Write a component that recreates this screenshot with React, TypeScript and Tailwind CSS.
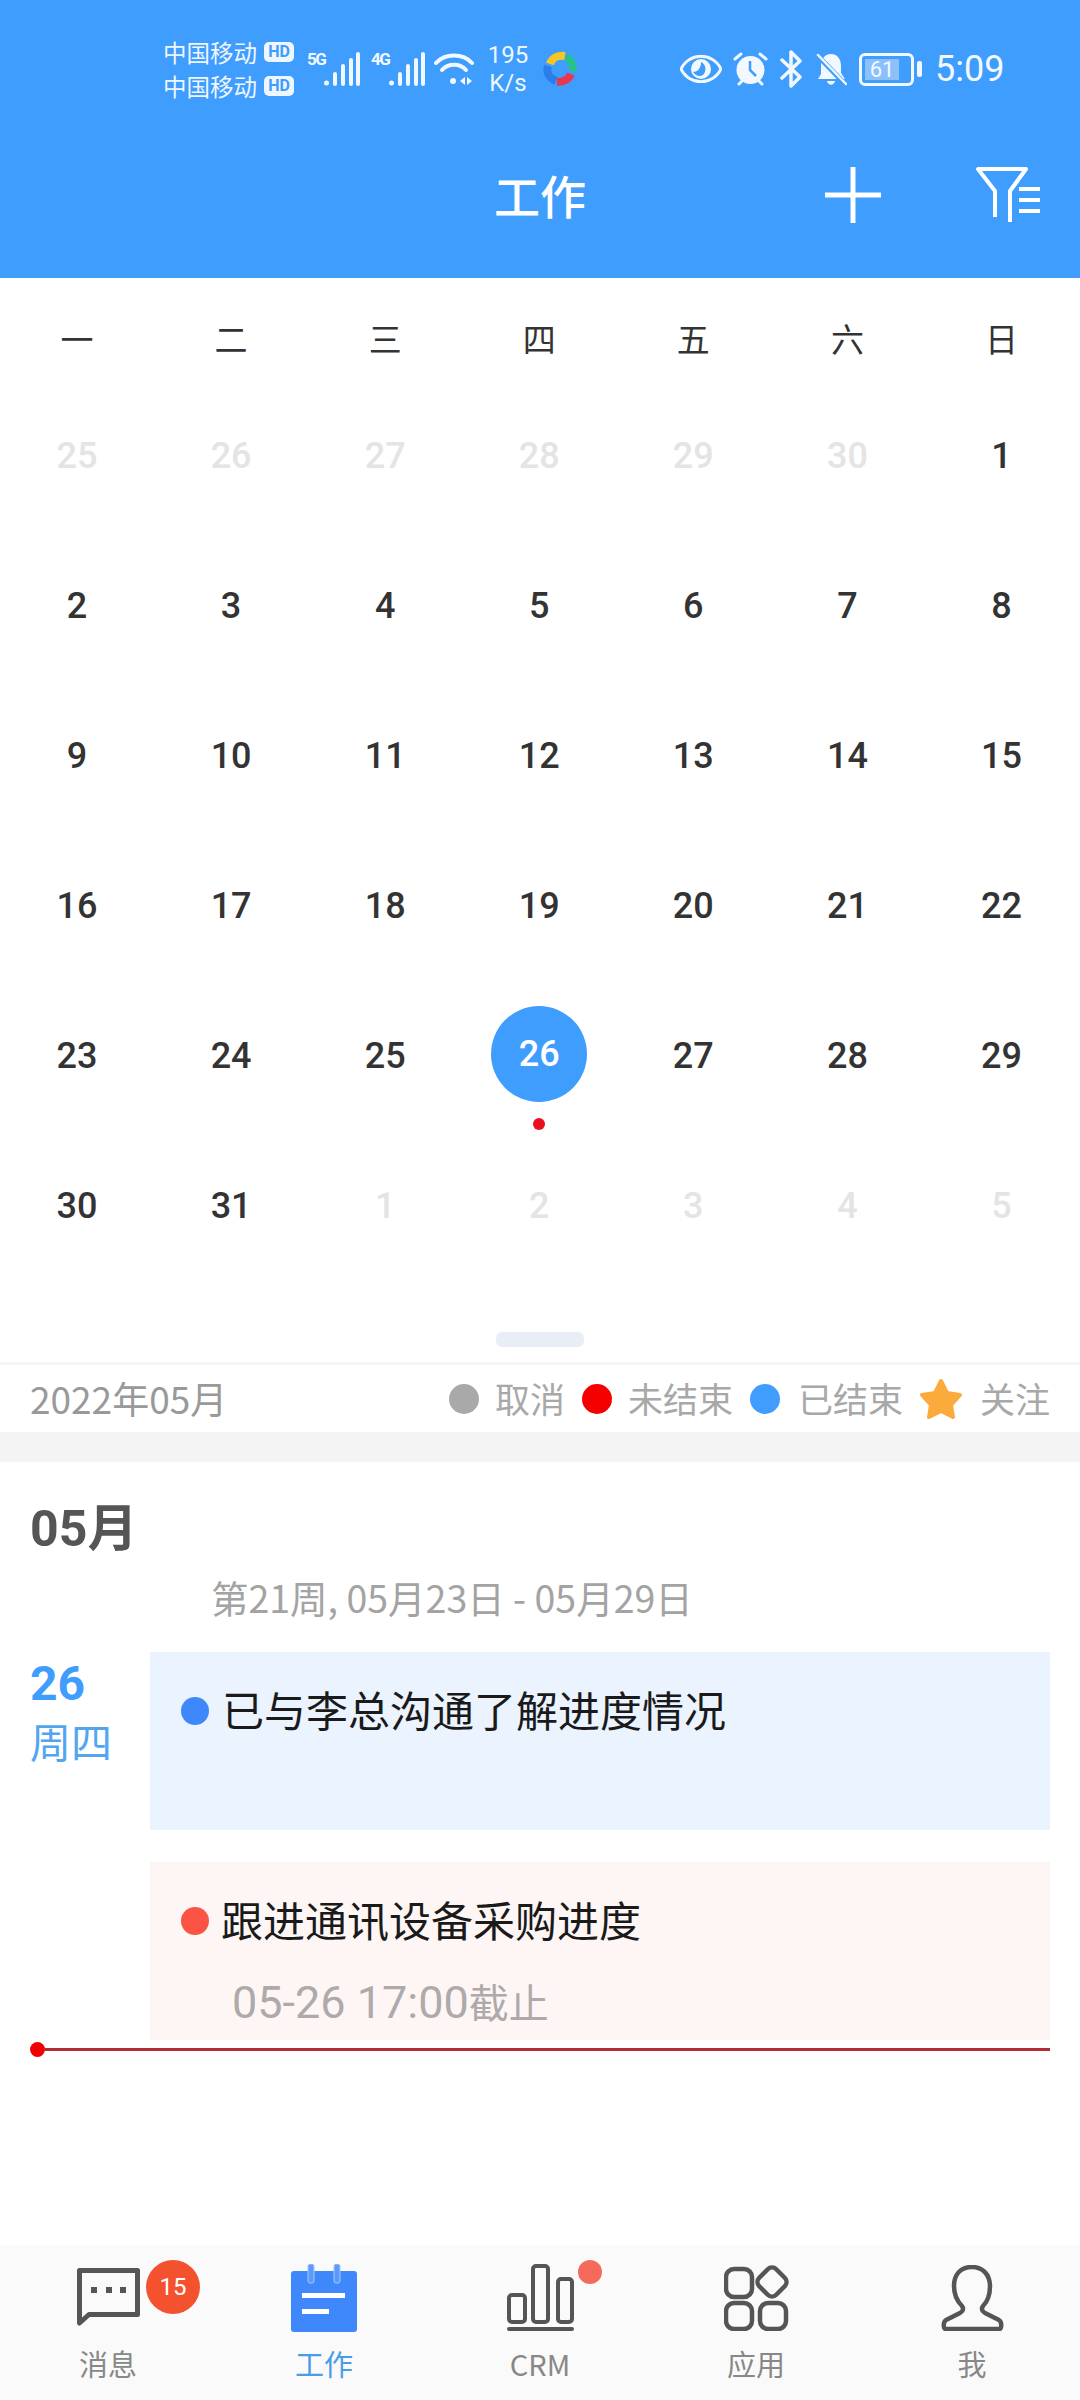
import React from 'react';

const sans = 'font-["Roboto","Noto_Sans_CJK_SC",sans-serif]';
const cjk = 'font-["Noto_Sans_CJK_SC",sans-serif]';

const weekdays = ['一', '二', '三', '四', '五', '六', '日'];

// [label, faded]
const days: [number, boolean][] = [
  [25, true], [26, true], [27, true], [28, true], [29, true], [30, true], [1, false],
  [2, false], [3, false], [4, false], [5, false], [6, false], [7, false], [8, false],
  [9, false], [10, false], [11, false], [12, false], [13, false], [14, false], [15, false],
  [16, false], [17, false], [18, false], [19, false], [20, false], [21, false], [22, false],
  [23, false], [24, false], [25, false], [26, false], [27, false], [28, false], [29, false],
  [30, false], [31, false], [1, true], [2, true], [3, true], [4, true], [5, true],
];

const Signal = () => (
  <svg width="36" height="34" viewBox="0 0 36 34" fill="#f2f8ff">
    <circle cx="2.5" cy="31" r="2.5" />
    <rect x="9" y="20" width="4" height="14" rx="2" />
    <rect x="17" y="12" width="4" height="22" rx="2" />
    <rect x="25" y="6" width="4" height="28" rx="2" />
    <rect x="32" y="0" width="4" height="34" rx="2" />
  </svg>
);

const Carrier = () => (
  <div className="flex items-center h-[34px] text-[23.5px] leading-[30px] text-[#eef6ff] whitespace-nowrap">
    <span className="w-[95px]">中国移动</span>
    <span className={`ml-[6px] w-[30px] h-[20px] rounded-[5px] bg-[#eef6ff] text-[#3f9dfd] text-[16px] leading-[20px] font-bold text-center ${sans}`}>HD</span>
  </div>
);

const StatusBar = () => (
  <div className={`flex items-center h-[80px] mt-[29px] pl-[163px] text-[#f2f8ff] ${cjk}`}>
    <div className="flex flex-col w-[131px]">
      <Carrier />
      <Carrier />
    </div>
    <span className={`ml-[13px] self-start mt-[18px] w-[17px] text-[17px] leading-[24px] font-bold tracking-[-1.5px] ${sans}`}>5G</span>
    <div><Signal /></div>
    <span className={`ml-[11px] self-start mt-[18px] w-[18px] text-[17px] leading-[24px] font-bold tracking-[-1.5px] ${sans}`}>4G</span>
    <div><Signal /></div>
    <svg className="ml-[9px]" width="40" height="34" viewBox="0 0 40 34" fill="none" stroke="#f2f8ff" strokeLinecap="round">
      <path d="M2 11 C11 1 29 1 38 11" strokeWidth="4" />
      <path d="M8 18 C14 11 26 11 32 18" strokeWidth="4" />
      <circle cx="19" cy="29" r="3" fill="#f2f8ff" stroke="none" />
      <path d="M26 29 L31 25 V33 Z M38 29 L33 25 V33 Z" fill="#f2f8ff" stroke="none" />
    </svg>
    <div className={`ml-[15px] w-[38px] flex flex-col items-center text-[24px] leading-[28px] text-[#eef6ff] ${sans}`}>
      <span>195</span>
      <span>K/s</span>
    </div>
    <svg className="ml-[16px]" width="34" height="36" viewBox="0 0 34 36" fill="none" strokeWidth="8">
      <path d="M7 13 C9 7 15 4 22 5" stroke="#f6c626" />
      <path d="M23 6 C29 9 31 15 29 20" stroke="#25c08e" />
      <path d="M28 23 C26 28 21 31 14 31" stroke="#e8384f" />
      <path d="M13 30 C6 27 3 21 5 15" stroke="#2b7de9" />
    </svg>
    <svg className="ml-[103px]" width="42" height="28" viewBox="0 0 42 28">
      <path d="M1 14 C9 -3 33 -3 41 14 C33 31 9 31 1 14 Z" fill="none" stroke="#f2f8ff" strokeWidth="3" />
      <circle cx="21" cy="14" r="10" fill="#f2f8ff" />
      <path d="M13 17 C18 17 21 13 21 7 C26 9 27 16 23 20 C20 22 16 21 13 17 Z" fill="#3f9dfd" />
    </svg>
    <svg className="ml-[11px]" width="35" height="34" viewBox="0 0 35 34">
      <circle cx="17.5" cy="18" r="14" fill="#f2f8ff" />
      <path d="M17 9 V18 L23 24" fill="none" stroke="#3f9dfd" strokeWidth="2.5" />
      <path d="M2 7 L8 2 M33 7 L27 2 M6 32 L9 29 M29 32 L26 29" stroke="#f2f8ff" strokeWidth="3" strokeLinecap="round" />
    </svg>
    <svg className="ml-[12px]" width="23" height="38" viewBox="0 0 23 38" fill="none" stroke="#f2f8ff" strokeWidth="3.5" strokeLinejoin="round" strokeLinecap="round">
      <path d="M2 10 L20 27 L11 36 V2 L20 11 L2 28" />
    </svg>
    <svg className="ml-[12px]" width="32" height="34" viewBox="0 0 32 34">
      <path d="M16 2 C23 2 26 8 26 14 V21 L30 27 H3 L6 22 V14 C6 8 9 2 16 2 Z M12 29 H20 C19 34 13 34 12 29 Z" fill="#f2f8ff" />
      <path d="M2 3 L30 32" stroke="#3f9dfd" strokeWidth="5" />
      <path d="M3 3 L31 32" stroke="#f2f8ff" strokeWidth="2.5" strokeLinecap="round" />
    </svg>
    <div className="ml-[12px] flex items-center">
      <div className="w-[55px] h-[33px] rounded-[6px] border-[3px] border-[#f2f8ff] p-[3px] pr-[12px]">
        <div className={`h-full bg-[#8cc0fb] text-[22px] leading-[21px] text-center text-[#f2f8ff] ${sans}`}>61</div>
      </div>
      <div className="ml-[3px] w-[5px] h-[16px] rounded-[2px] bg-[#f2f8ff]" />
    </div>
    <span className={`ml-[13px] text-[36px] leading-[40px] text-[#f2f8ff] ${sans}`}>5:09</span>
  </div>
);

const Header = () => (
  <header className="h-[278px] bg-[#3f9dfd] flex flex-col">
    <StatusBar />
    <div className="flex items-center h-[169px] px-[40px] pt-[3px]">
      <div className="flex-1" />
      <h1 className={`pb-[3px] text-[46px] leading-[56px] font-medium text-white ${cjk}`}>工作</h1>
      <div className="flex-1 flex items-center justify-end gap-[95px]">
        <svg width="56" height="56" viewBox="0 0 56 56" stroke="#fff" strokeWidth="5">
          <path d="M28 0 V56 M0 28 H56" />
        </svg>
        <svg width="64" height="56" viewBox="0 0 64 56" fill="none" stroke="#fff" strokeWidth="4" strokeLinejoin="round">
          <path d="M19 50 V24 L2 2 H50 L34 24 V55" />
          <path d="M43 22 H64 M43 33 H64 M43 44 H64" />
        </svg>
      </div>
    </div>
  </header>
);

const Calendar = () => (
  <section>
    <div className={`grid grid-cols-7 pr-[1.5px] h-[101px] pt-[40px] text-[33px] leading-[40px] text-[#333] text-center ${cjk}`}>
      {weekdays.map((d) => <div key={d}>{d}</div>)}
    </div>
    <div className={`grid grid-cols-7 pr-[1.5px] text-[36px] font-medium ${sans}`}>
      {days.map(([n, faded], i) => {
        const selected = i === 31;
        return (
          <div key={i} className="relative h-[150px] flex items-center justify-center">
            {selected && (
              <>
                <div className="w-[96px] h-[96px] rounded-full bg-[#3f9dfd] text-white flex items-center justify-center">{n}</div>
                <div className="absolute left-1/2 top-[139px] -ml-[6px] w-[12px] h-[12px] rounded-full bg-[#e9111b]" />
              </>
            )}
            {!selected && <span className={`mt-[3px] ${faded ? 'text-[#e4e4e4]' : 'text-[#333]'}`}>{n}</span>}
          </div>
        );
      })}
    </div>
    <div className="mt-[53px] mx-auto w-[88px] h-[15px] rounded-[6px] bg-[#e9edf6]" />
    <div className="mt-[15px] h-[3px] bg-[#f5f5f5]" />
  </section>
);

const Dot = ({ color }: { color: string }) => (
  <span className={`block w-[30px] h-[30px] rounded-full ${color}`} />
);

const Legend = () => (
  <div className={`h-[67px] flex items-center justify-between px-[30px] text-[35px] text-[#a8a8a8] ${cjk}`}>
    <span className="text-[37px] text-[#999]">2022年05月</span>
    <div className="flex items-center">
      <Dot color="bg-[#a9a9a9]" />
      <span className="ml-[16px]">取消</span>
      <span className="ml-[17px]"><Dot color="bg-[#f50000]" /></span>
      <span className="ml-[16px]">未结束</span>
      <span className="ml-[17px]"><Dot color="bg-[#409dfd]" /></span>
      <span className="ml-[18px]">已结束</span>
      <svg className="ml-[16px]" width="44" height="42" viewBox="0 0 44 42">
        <path d="M22 3 L28 15 L41 17 L32 27 L34 39 L22 33 L10 39 L12 27 L3 17 L16 15 Z" fill="#fbab3c" stroke="#fbab3c" strokeWidth="4" strokeLinejoin="round" />
      </svg>
      <span className="ml-[17px]">关注</span>
    </div>
  </div>
);

const Agenda = () => (
  <section className={`px-[30px] ${cjk}`}>
    <div className={`mt-[37px] h-[50px] text-[50px] leading-[50px] font-bold text-[#555] ${sans}`}>
      05<span className={cjk}>月</span>
    </div>
    <div className="mt-[28px] h-[40px] pl-[181px] text-[37.5px] leading-[40px] text-[#a3a3a3]">第21周, 05月23日 - 05月29日</div>
    <div className="mt-[35px] flex">
      <div className="w-[120px] pt-[7px] text-[#409dfd]">
        <div className={`h-[50px] text-[48px] leading-[50px] font-bold ${sans}`}>26</div>
        <div className="mt-[9px] h-[44px] text-[41px] leading-[44px] text-[#53a6ee]">周四</div>
      </div>
      <div className="flex-1 flex flex-col gap-[32px]">
        <div className="h-[178px] bg-[#eaf3fe] pt-[34px] pl-[31px]">
          <div className="flex items-center h-[50px] text-[42px] text-[#1a1a1a]">
            <span className="w-[28px] h-[28px] rounded-full bg-[#3f88fb]" />
            <span className="ml-[13px] pb-[6px]">已与李总沟通了解进度情况</span>
          </div>
        </div>
        <div className="h-[178px] bg-[#fef6f5] pt-[34px] pl-[31px]">
          <div className="flex items-center h-[50px] text-[42px] text-[#1a1a1a]">
            <span className="w-[28px] h-[28px] rounded-full bg-[#fb5444]" />
            <span className="ml-[12px] pb-[6px]">跟进通讯设备采购进度</span>
          </div>
          <div className={`mt-[32px] ml-[51px] h-[46px] text-[45px] leading-[46px] text-[#aeaaaa] ${sans}`}>
            05-26 17:00<span className={`text-[40px] ${cjk}`}>截止</span>
          </div>
        </div>
      </div>
    </div>
    <div className="mt-[1px] flex items-center h-[16px]">
      <span className="w-[15px] h-[15px] rounded-full bg-[#f00000]" />
      <span className="flex-1 h-[3px] bg-[#b32d35]" />
    </div>
  </section>
);

const tabs = [
  {
    label: '消息',
    icon: (
      <svg width="63" height="60" viewBox="0 0 63 60" fill="none" stroke="#555" strokeWidth="5" strokeLinejoin="round">
        <path d="M2.5 2.5 H60.5 V46.5 H12 L2.5 55 Z" />
        <path d="M14 22 H20 M29 22 H35 M43 22 H49" strokeWidth="6" />
      </svg>
    ),
  },
  {
    label: '工作',
    active: true,
    icon: (
      <svg width="66" height="68" viewBox="0 0 66 68">
        <rect y="7" width="66" height="61" rx="3" fill="#3f88fb" />
        <rect x="17" y="0" width="6" height="19" rx="2" fill="#5a9afc" stroke="#a9c8fd" strokeWidth="1" />
        <rect x="43" y="0" width="6" height="19" rx="2" fill="#5a9afc" stroke="#a9c8fd" strokeWidth="1" />
        <rect x="11" y="29" width="43" height="5" fill="#fff" />
        <rect x="11" y="45" width="27" height="5" fill="#fff" />
      </svg>
    ),
  },
  {
    label: 'CRM',
    icon: (
      <svg width="67" height="68" viewBox="0 0 67 68" fill="none" stroke="#555" strokeWidth="4" strokeLinecap="round">
        <rect x="2" y="31" width="16" height="27" rx="3" />
        <rect x="26" y="2" width="15" height="56" rx="3" />
        <rect x="51" y="15" width="14" height="43" rx="3" />
        <path d="M2 65 H65" />
      </svg>
    ),
  },
  {
    label: '应用',
    icon: (
      <svg width="65" height="66" viewBox="0 0 65 66" fill="none" stroke="#555" strokeWidth="4.5">
        <rect x="2" y="4" width="26" height="28" rx="8" />
        <rect x="2" y="38" width="26" height="26" rx="8" />
        <rect x="36" y="38" width="26" height="26" rx="8" />
        <rect x="36" y="5" width="24" height="24" rx="6" transform="rotate(45 48 17)" />
      </svg>
    ),
  },
  {
    label: '我',
    icon: (
      <svg width="63" height="66" viewBox="0 0 63 66" fill="none" stroke="#555" strokeWidth="4.5" strokeLinejoin="round">
        <path d="M31 2 C19 2 13 10 13 21 C13 30 17 37 21 41 C23 44 22 46 19 48 L5 55 C2 57 2 64 5 64 H58 C61 64 61 57 58 55 L44 48 C41 46 40 44 42 41 C46 37 49 30 49 21 C49 10 42 2 31 2 Z" />
      </svg>
    ),
  },
];

const TabBar = () => (
  <nav className={`h-[155px] bg-[#fafafa] grid grid-cols-5 ${cjk}`}>
    {tabs.map((t) => (
      <div key={t.label} className="relative flex flex-col items-center pt-[19px]">
        <div className="h-[68px] flex items-center">{t.icon}</div>
        <span className={`mt-[13px] h-[36px] text-[29px] leading-[36px] ${t.active ? 'text-[#4a9be8]' : 'text-[#888]'}`}>{t.label}</span>
        {t.label === '消息' && (
          <span className={`absolute left-[146px] top-[15px] w-[54px] h-[54px] rounded-full bg-[#f4512f] text-white text-[24px] leading-[54px] text-center ${sans}`}>15</span>
        )}
        {t.label === 'CRM' && (
          <span className="absolute left-[146px] top-[15px] w-[24px] h-[24px] rounded-full bg-[#f56a5b]" />
        )}
      </div>
    ))}
  </nav>
);

export default function App() {
  return (
    <div className="w-[1080px] h-[2400px] bg-white flex flex-col overflow-hidden">
      <Header />
      <Calendar />
      <Legend />
      <div className="h-[30px] bg-[#f4f4f4]" />
      <Agenda />
      <div className="flex-1" />
      <TabBar />
    </div>
  );
}
